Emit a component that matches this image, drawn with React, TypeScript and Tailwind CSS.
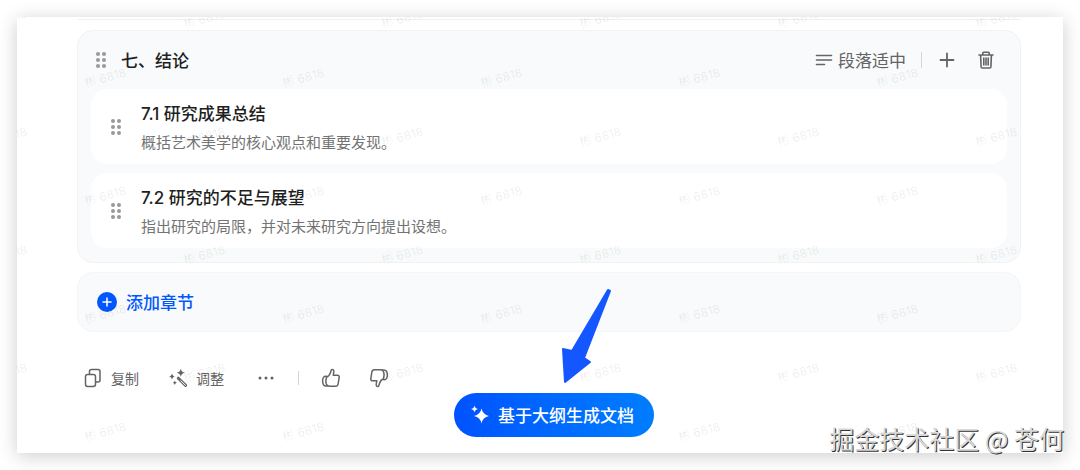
import React from "react";

const sections = [
  { title: "7.1 研究成果总结", desc: "概括艺术美学的核心观点和重要发现。" },
  {
    title: "7.2 研究的不足与展望",
    desc: "指出研究的局限，并对未来研究方向提出设想。",
  },
];

const DragHandle = () => (
  <svg width="12" height="18" viewBox="0 0 12 18" fill="#999" className="shrink-0">
    {[3, 9, 15].map((y) => (
      <React.Fragment key={y}>
        <circle cx="3" cy={y} r="2" />
        <circle cx="9" cy={y} r="2" />
      </React.Fragment>
    ))}
  </svg>
);

const TrashIcon = () => (
  <svg width="20" height="20" viewBox="0 0 20 20" fill="none" stroke="currentColor" strokeWidth="1.6" strokeLinejoin="round" strokeLinecap="round">
    <path d="M3 5h14M6.8 5V3a.8.8 0 0 1 .8-.8h4.8a.8.8 0 0 1 .8.8v2M4.6 5l.5 11.9a1.2 1.2 0 0 0 1.2 1.1h7.4a1.2 1.2 0 0 0 1.2-1.1L15.4 5M7.8 8v7M10 8v7M12.2 8v7" />
  </svg>
);

const CopyIcon = () => (
  <svg width="20" height="20" viewBox="0 0 20 20" fill="none" stroke="currentColor" strokeWidth="1.5" strokeLinejoin="round">
    <rect x="2.5" y="6.5" width="10" height="12" rx="2.2" />
    <path d="M6.5 6.5V3.500a2 2 0 0 1 2-2h6.500a2 2 0 0 1 2 2v8.500a2 2 0 0 1-2 2h-2.500" />
  </svg>
);

const WandIcon = () => (
  <svg width="20" height="20" viewBox="0 0 20 20" fill="currentColor">
    <path d="M12.800.5q.6 3.700 4.200 4.200-3.600.5-4.200 4.200-.6-3.700-4.200-4.200 3.600-.5 4.200-4.200zM4 5.200q.4 3 3.200 3.400Q4.400 9 4 12 3.600 9 .8 8.600 3.600 8.200 4 5.200zM6.800 12.600q.3 1.900 2.100 2.200-1.800.3-2.100 2.200-.3-1.900-2.100-2.200 1.800-.3 2.100-2.200z" />
    <path d="M10.300 10.200l7.300 7.200" fill="none" stroke="currentColor" strokeWidth="3" strokeLinecap="round" />
    <path d="M12.800 12.700l4.700 4.600" fill="none" stroke="white" strokeWidth="1" strokeLinecap="round" />
  </svg>
);

const ThumbIcon = ({ className = "" }: { className?: string }) => (
  <svg width="20" height="20" viewBox="0 0 20 20" fill="none" stroke="currentColor" strokeWidth="1.5" strokeLinejoin="round" strokeLinecap="round" className={className}>
    <path d="M5.500 9.200c1.900-.5 3.300-2.500 4-4.800l.8-2.300c.3-.9 1.600-.9 2.100-.2.500.7.500 1.800.3 2.700l-.5 2.600h4.100c1.300 0 2.100 1 1.900 2.200l-1.100 6.600c-.2 1.300-1 2.200-2.300 2.200H8.500c-1.700 0-2.700-.8-3.200-2.200-.7-2.200-.6-4.500.2-6.800z" />
    <path d="M5.300 8.300c-2.500-.3-3.700 1.600-3.700 4.400 0 2.900 1 5.300 3.400 5.300h2" />
  </svg>
);

const SparkleIcon = () => (
  <svg width="20" height="20" viewBox="0 0 20 20" fill="currentColor">
    <path d="M11.500 3.500q1.200 6.200 7.500 7.500-6.300 1.300-7.500 7.500-1.200-6.200-7.500-7.500 6.300-1.300 7.500-7.500zM4.500.5q.5 3 3.500 3.500-3 .5-3.500 3.500Q4 4.500 1 4q3-.5 3.500-3.500z" />
  </svg>
);

const Watermark = () => (
  <div className="absolute inset-0 overflow-hidden pointer-events-none select-none" aria-hidden="true">
    <div className="-mt-7 font-['Inter','Noto_Sans_CJK_SC',sans-serif]">
      {[6, 5, 6, 5, 6, 5, 6, 5].map((count, row) => (
        <div key={row} className={row % 2 ? "flex -ml-[11px]" : "flex -ml-[110px]"}>
          {Array.from({ length: count }, (_, col) => (
            <div key={col} className="flex h-[59px] w-[198px] shrink-0 items-center justify-center">
              <span className="-rotate-15 text-xs leading-none text-black/8">彬 6818</span>
            </div>
          ))}
        </div>
      ))}
    </div>
  </div>
);

export default function App() {
  return (
    <div className="relative p-[17px] font-['Noto_Sans_CJK_SC',sans-serif] text-[#646464]">
      <main className="relative flex flex-col bg-white pr-[42px] pb-4 pl-[60px] shadow-[0_3px_18px_rgba(0,0,0,0.2)]">
        <div className="h-[3px] rounded-b-2xl border-b border-[#eff0f2]" />

        <section className="mt-[10px] rounded-2xl border border-[#f0f2f4] bg-[#f8fafb] px-[13px] pb-[14px]">
          <div className="flex h-[58px] items-center pr-[11px] pl-1">
            <DragHandle />
            <h2 className="ml-[14px] text-[17px] font-medium text-[#1f1f1f]">七、结论</h2>
            <button className="ml-auto flex items-center gap-1 text-[17px]">
              <svg width="20" height="20" viewBox="0 0 20 20" fill="none" stroke="currentColor" strokeWidth="1.6" strokeLinecap="round">
                <path d="M2.500 5.500h15M2.500 10h15M2.500 14.500h8" />
              </svg>
              段落适中
            </button>
            <span className="mx-[15px] h-4 w-px bg-[#d3d5d7]" />
            <button aria-label="添加">
              <svg width="20" height="20" viewBox="0 0 20 20" fill="none" stroke="currentColor" strokeWidth="1.8" strokeLinecap="round">
                <path d="M10 3.500v13M3.500 10h13" />
              </svg>
            </button>
            <button aria-label="删除" className="ml-[19px]">
              <TrashIcon />
            </button>
          </div>
          <div className="flex flex-col gap-[9px]">
            {sections.map((item) => (
              <div key={item.title} className="flex h-[75px] items-center rounded-2xl bg-white px-[19px]">
                <DragHandle />
                <div className="ml-[19px] pt-0.5">
                  <h3 className="font-['Inter','Noto_Sans_CJK_SC',sans-serif] text-[17px] leading-7 font-medium text-[#1f1f1f]">
                    {item.title}
                  </h3>
                  <p className="text-[15px] leading-7 text-[#737373]">{item.desc}</p>
                </div>
              </div>
            ))}
          </div>
        </section>

        <button className="mt-[9px] flex h-[60px] items-center gap-[9px] rounded-2xl border border-[#f3f5f7] bg-[#f8fafb] px-[19px] text-[17px] font-medium text-[#0057ff]">
          <svg width="20" height="20" viewBox="0 0 20 20">
            <circle cx="10" cy="10" r="10" fill="#0057ff" />
            <path d="M10 6v8M6 10h8" stroke="white" strokeWidth="1.5" strokeLinecap="round" />
          </svg>
          添加章节
        </button>

        <div className="mt-8 flex h-7 items-center pl-[6px] text-sm">
          <button className="flex items-center gap-2">
            <CopyIcon />
            复制
          </button>
          <button className="ml-[29px] flex items-center gap-2">
            <WandIcon />
            调整
          </button>
          <button aria-label="更多" className="ml-8">
            <svg width="20" height="20" viewBox="0 0 20 20" fill="currentColor">
              <circle cx="4" cy="10" r="1.5" />
              <circle cx="10" cy="10" r="1.5" />
              <circle cx="16" cy="10" r="1.5" />
            </svg>
          </button>
          <span className="mx-[22px] h-[14px] w-px bg-[#d3d5d7]" />
          <button aria-label="赞">
            <ThumbIcon />
          </button>
          <button aria-label="踩" className="ml-7">
            <ThumbIcon className="rotate-180" />
          </button>
        </div>

        <Watermark />

        <div className="relative mt-px flex justify-center pl-[10px]">
          <div className="relative">
            <button className="flex h-11 w-[200px] items-center justify-center gap-2 rounded-full bg-linear-to-r from-[#0052ff] to-[#007dff] pr-1 text-[17px] font-medium text-white">
              <SparkleIcon />
              基于大纲生成文档
            </button>
            <svg className="absolute bottom-[53px] left-[106px]" width="54" height="98" viewBox="0 0 54 98" fill="#1456ff" stroke="#1456ff" strokeWidth="2" strokeLinejoin="round">
              <path d="M48 4L50 5L24 72L30 76L5 96L3 63L12 65Z" />
            </svg>
          </div>
        </div>
      </main>

      <div className="absolute right-4 bottom-4 text-[25px] leading-8 whitespace-nowrap text-[#d8d8d8] [text-shadow:1px_1px_0_#333]">
        掘金技术社区 @ 苍何
      </div>
    </div>
  );
}
